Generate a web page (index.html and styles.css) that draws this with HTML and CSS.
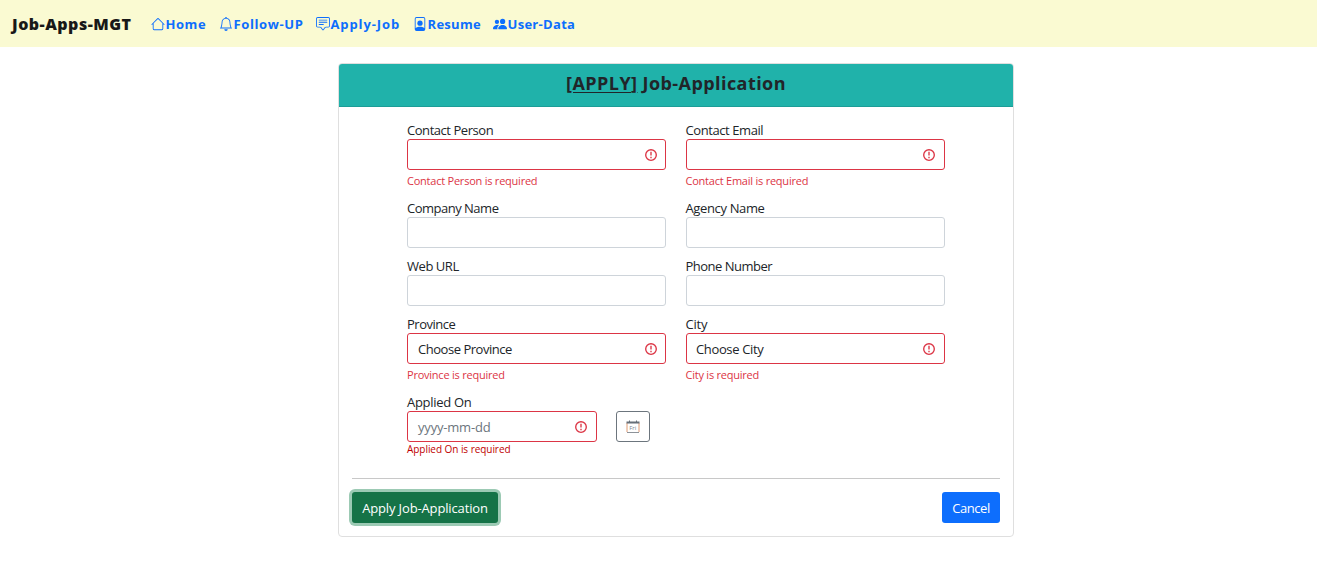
FILE: index.html
```html
<!DOCTYPE html>
<html lang="en">
<head>
<meta charset="utf-8">
<title>Job-Apps-MGT</title>
<link rel="stylesheet" href="styles.css">
</head>
<body>
<nav class="navbar">
  <a class="brand">Job-Apps-MGT</a>
  <a class="nav-link home"><svg viewBox="0 0 16 16"><path d="M8.707 1.5a1 1 0 0 0-1.414 0L.646 8.146a.5.5 0 0 0 .708.708L2 8.207V13.5A1.5 1.5 0 0 0 3.500 15h9a1.500 1.500 0 0 0 1.500-1.500V8.207l.646.647a.5.5 0 0 0 .708-.708zM13 7.207V13.500a.5.5 0 0 1-.5.5h-9a.5.5 0 0 1-.5-.5V7.207l5-5z"/></svg><span>Home</span></a>
  <a class="nav-link follow"><svg viewBox="0 0 16 16"><path d="M8 16a2 2 0 0 0 2-2H6a2 2 0 0 0 2 2M8 1.918l-.797.161A4 4 0 0 0 4 6c0 .628-.134 2.197-.459 3.742-.16.767-.376 1.566-.663 2.258h10.244c-.287-.692-.502-1.490-.663-2.258C12.134 8.197 12 6.628 12 6a4 4 0 0 0-3.203-3.920zM14.220 12c.223.447.481.801.78 1H1c.299-.199.557-.553.780-1C2.680 10.200 3 6.880 3 6c0-2.420 1.720-4.440 4.005-4.901a1 1 0 1 1 1.990 0A5 5 0 0 1 13 6c0 .88.32 4.200 1.220 6"/></svg><span>Follow-UP</span></a>
  <a class="nav-link apply"><svg viewBox="0 0 16 16"><path d="M14 1a1 1 0 0 1 1 1v8a1 1 0 0 1-1 1h-2.500a2 2 0 0 0-1.600.8L8 14.333 6.100 11.800a2 2 0 0 0-1.600-.8H2a1 1 0 0 1-1-1V2a1 1 0 0 1 1-1zM2 0a2 2 0 0 0-2 2v8a2 2 0 0 0 2 2h2.500a1 1 0 0 1 .8.4l1.900 2.533a1 1 0 0 0 1.600 0l1.900-2.533a1 1 0 0 1 .8-.4H14a2 2 0 0 0 2-2V2a2 2 0 0 0-2-2z"/><path d="M3 3.500a.5.5 0 0 1 .5-.5h9a.5.5 0 0 1 0 1h-9a.5.5 0 0 1-.5-.5M3 6a.5.5 0 0 1 .5-.5h9a.5.5 0 0 1 0 1h-9A.5.5 0 0 1 3 6m0 2.500a.5.5 0 0 1 .5-.5h5a.5.5 0 0 1 0 1h-5a.5.5 0 0 1-.5-.5"/></svg><span>Apply-Job</span></a>
  <a class="nav-link resume"><svg viewBox="0 0 16 16"><path d="M12 1a1 1 0 0 1 1 1v10.755S12 11 8 11s-5 1.755-5 1.755V2a1 1 0 0 1 1-1zM4 0a2 2 0 0 0-2 2v12a2 2 0 0 0 2 2h8a2 2 0 0 0 2-2V2a2 2 0 0 0-2-2z"/><path d="M8 10a3 3 0 1 0 0-6 3 3 0 0 0 0 6"/></svg><span>Resume</span></a>
  <a class="nav-link user"><svg viewBox="0 0 16 16"><path d="M7 14s-1 0-1-1 1-4 5-4 5 3 5 4-1 1-1 1zm4-6a3 3 0 1 0 0-6 3 3 0 0 0 0 6m-5.784 6A2.240 2.240 0 0 1 5 13c0-1.355.68-2.750 1.936-3.720A6.300 6.300 0 0 0 5 9c-4 0-5 3-5 4s1 1 1 1zM4.500 8a2.500 2.500 0 1 0 0-5 2.500 2.500 0 0 0 0 5"/></svg><span>User-Data</span></a>
</nav>
<main class="card">
  <h1 class="card-header"><span class="title"><u>[APPLY]</u> Job-Application</span></h1>
  <form class="form-grid">
    <div class="field"><label>Contact Person</label><div class="control invalid"><svg class="alert" viewBox="0 0 12 12"><circle cx="6" cy="6" r="5.300"/><path d="M6 2.800v3.600M6 7.800v1.500"/></svg></div><small class="h-person">Contact Person is required</small></div>
    <div class="field right"><label class="l-email">Contact Email</label><div class="control invalid"><svg class="alert" viewBox="0 0 12 12"><circle cx="6" cy="6" r="5.300"/><path d="M6 2.800v3.600M6 7.800v1.500"/></svg></div><small class="h-email">Contact Email is required</small></div>
    <div class="field"><label class="l-company">Company Name</label><div class="control"></div></div>
    <div class="field right"><label class="l-agency">Agency Name</label><div class="control"></div></div>
    <div class="field"><label class="l-web">Web URL</label><div class="control"></div></div>
    <div class="field right"><label class="l-phone">Phone Number</label><div class="control"></div></div>
    <div class="field"><label class="l-province">Province</label><div class="control invalid"><span class="v-province">Choose Province</span><svg class="alert" viewBox="0 0 12 12"><circle cx="6" cy="6" r="5.300"/><path d="M6 2.800v3.600M6 7.800v1.500"/></svg></div><small class="h-province">Province is required</small></div>
    <div class="field right"><label class="l-city">City</label><div class="control invalid"><span class="v-city">Choose City</span><svg class="alert" viewBox="0 0 12 12"><circle cx="6" cy="6" r="5.300"/><path d="M6 2.800v3.600M6 7.800v1.500"/></svg></div><small class="h-city">City is required</small></div>
    <div class="field date"><label class="l-date">Applied On</label>
      <div class="date-row"><div class="control invalid"><span class="placeholder">yyyy-mm-dd</span><svg class="alert" viewBox="0 0 12 12"><circle cx="6" cy="6" r="5.300"/><path d="M6 2.800v3.600M6 7.800v1.500"/></svg></div>
      <div class="calendar"><svg viewBox="0 0 14 14"><path class="side" d="M1 3v9M13 3v9"/><path class="edge" d="M1 12.500h12"/><path class="top" d="M.5 1.500H3V.5h1v1h6V.5h1v1h2.500v2H.5z"/><text x="3.200" y="10">Fri</text></svg></div></div>
      <small class="date-error">Applied On is required</small></div>
  </form>
  <footer class="actions"><button class="btn submit" type="button"><span>Apply Job-Application</span></button><button class="btn cancel" type="button"><span>Cancel</span></button></footer>
</main>
</body>
</html>
```
FILE: styles.css
```css
* { box-sizing: border-box; }
body { margin: 0; background: #fff; color: #212529; font: 13px "Open Sans", "Noto Sans", sans-serif; }
.navbar { display: flex; align-items: center; height: 47px; padding: 0 12px; background: #fafad2; white-space: nowrap; }
.brand { width: 139px; color: #181818; font-size: 16px; font-weight: 800; line-height: 24px; letter-spacing: .5px; }
.nav-link { display: flex; align-items: center; color: #0d6efd; font-size: 13px; font-weight: 700; line-height: 20px; letter-spacing: .55px; }
.nav-link svg { width: 14px; height: 14px; flex: none; fill: currentColor; }
.nav-link span { padding-left: .5px; }
.home { width: 68px; }
.follow { width: 97px; letter-spacing: .62px; }
.apply { width: 97px; letter-spacing: .9px; }
.resume { width: 80px; letter-spacing: .3px; }
.user { letter-spacing: .3px; }
.card { display: flex; flex-direction: column; width: 676px; height: 474px; margin: 16px 0 0 338px; border: 1px solid #dfdfdf; border-radius: 4px; }
.card-header { height: 43px; margin: 0; padding-top: 7px; border-bottom: 1px solid #1c9d97; border-radius: 3px 3px 0 0; background: #20b2aa; font-size: 18px; font-weight: 700; line-height: 24px; text-align: center; letter-spacing: .43px; }
.card-header u { text-decoration-thickness: 1px; text-underline-offset: 2px; }
.form-grid { display: grid; grid-template-columns: 259px 259px; grid-template-rows: 78px 58px 58px 78px 85px; column-gap: 20px; padding: 14px 68px 0; }
.field { display: flex; flex-direction: column; align-items: flex-start; }
label { height: 18px; line-height: 18px; white-space: nowrap; letter-spacing: -.45px; }
.l-email { letter-spacing: -.42px; }
.l-company, .l-phone, .l-province { letter-spacing: -.5px; }
.l-agency { letter-spacing: -.36px; }
.l-city { letter-spacing: -.2px; }
.l-date { letter-spacing: -.3px; }
.control { display: flex; align-items: center; width: 100%; height: 31px; flex: none; padding: 0 8px 0 10px; border: 1px solid #ced4da; border-radius: 3px; }
.right .control { padding-left: 9px; padding-right: 9px; }
.right label, .right small { margin-left: -.5px; }
.invalid { border-color: #dc3545; }
.v-province { letter-spacing: -.47px; }
.v-city { letter-spacing: -.36px; }
.alert { width: 12px; height: 12px; margin-left: auto; fill: none; stroke: #dc3545; stroke-width: 1.350; }
small { margin-top: 2px; color: #dc3545; font-size: 11px; line-height: 18px; white-space: nowrap; letter-spacing: -.23px; }
.date-row { display: flex; gap: 19px; }
.date .control { width: 190px; padding-right: 9px; }
.placeholder { color: #6c757d; letter-spacing: -.2px; }
.calendar { display: grid; place-items: center; width: 34px; height: 31px; border: 1px solid #6c757d; border-radius: 3px; }
.calendar svg { width: 14px; height: 14px; fill: none; }
.calendar .top { fill: #666f78; }
.calendar .edge { stroke: #8d9399; }
.calendar .side { stroke: #df9c74; }
.calendar text { fill: #7d8790; font: 6px "Open Sans", sans-serif; }
.date-error { margin-top: 0; color: #c00000; font-size: 10px; line-height: 15px; letter-spacing: -.05px; }
.actions { display: flex; justify-content: space-between; margin: 0 13px; padding-top: 13px; border-top: 1px solid #c8c8c8; }
.btn { height: 31px; padding: 0; border: 0; border-radius: 3px; color: #fff; font: 13px "Open Sans", "Noto Sans", sans-serif; white-space: nowrap; }
.submit { width: 146px; background: #157347; box-shadow: 0 0 0 3px #9ccab4; letter-spacing: -.14px; }
.cancel { width: 58px; background: #0d6efd; letter-spacing: -.45px; }
```
